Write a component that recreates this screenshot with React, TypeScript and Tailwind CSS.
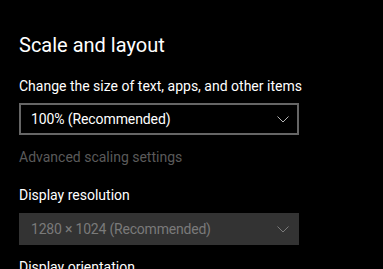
function Chevron({ color }: { color: string }) {
  return (
    <svg width="12" height="7" viewBox="0 0 12 7" fill="none" className="shrink-0">
      <path d="M0.5 0.5 L6 6 L11.5 0.5" stroke={color} strokeWidth="1" />
    </svg>
  );
}

export default function App() {
  return (
    <div className="h-[269px] w-full overflow-hidden bg-black pl-[19px] font-['Roboto',sans-serif] text-white">
      <h2 className="mt-[31px] text-[20px] leading-[28px] font-normal">Scale and layout</h2>

      <p className="mt-[17px] text-[14px] leading-[20px] whitespace-nowrap">
        Change the size of text, apps, and other items
      </p>
      <div className="mt-[7px] flex h-[32px] w-[280px] items-center justify-between border-2 border-[#666666] pl-[10px] pr-[8px]">
        <span className="text-[14px] leading-[20px] tracking-[-0.1px]">100% (Recommended)</span>
        <Chevron color="#b4b4b4" />
      </div>

      <p className="mt-[12px] text-[14px] leading-[20px] text-[#5a5a5a]">Advanced scaling settings</p>

      <p className="mt-[18px] text-[14px] leading-[20px]">Display resolution</p>
      <div className="mt-[8px] flex h-[32px] w-[280px] items-center justify-between bg-[#333333] pl-[12px] pr-[10px]">
        <span className="text-[14px] leading-[20px] tracking-[-0.2px] text-[#7a7a7a]">1280 × 1024 (Recommended)</span>
        <Chevron color="#7a7a7a" />
      </div>

      <p className="mt-[12px] text-[14px] leading-[20px]">Display orientation</p>
    </div>
  );
}
